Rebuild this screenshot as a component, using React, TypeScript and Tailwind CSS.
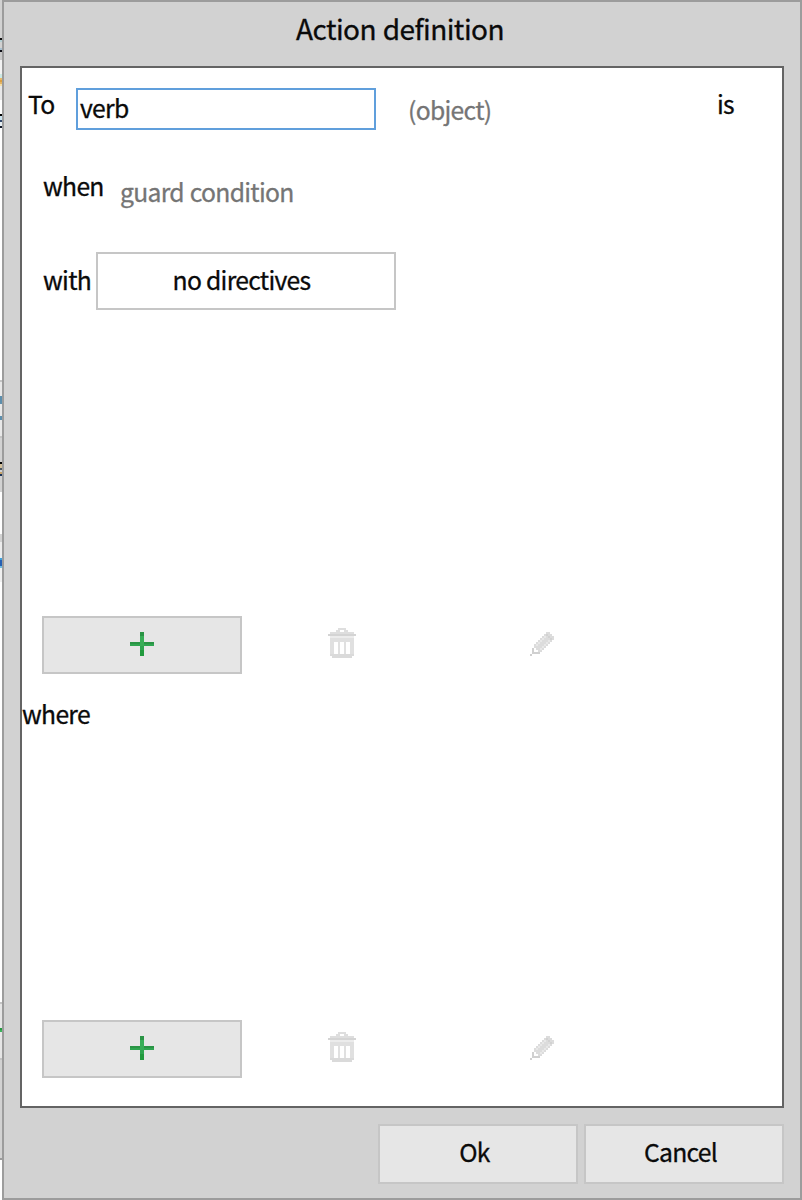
import type { ReactNode } from "react";

const strip: [number, string][] = [
  [38, "#d2d2d2"], [2, "#111111"], [2, "#b4cfd4"], [6, "#d2d2d2"], [2, "#a9c0d0"], [2, "#0b0b12"], [8, "#c8c8c8"],
  [14, "#f3f3f3"], [4, "#cdeae4"], [2, "#e9b868"], [2, "#dda040"], [2, "#e5b564"], [2, "#f4dfa8"], [14, "#e8e8e8"],
  [14, "#ffffff"], [2, "#000000"], [4, "#cbe4ef"], [2, "#31486c"], [4, "#e8f0f4"], [2, "#101828"], [252, "#ffffff"],
  [2, "#c4c4c4"], [14, "#e8e8e8"], [8, "#5c8eac"], [12, "#e8e8e8"], [4, "#5c8eac"], [16, "#e8e8e8"], [2, "#c4c4c4"],
  [24, "#d2d2d2"], [2, "#000000"], [4, "#d3c09b"], [2, "#4d5963"], [2, "#d2d2d2"], [2, "#c7a268"], [2, "#1a3358"], [16, "#d2d2d2"],
  [42, "#ffffff"], [8, "#d2d2d2"], [14, "#ededed"], [2, "#e4eff5"], [2, "#3fa0dc"], [6, "#2560b4"], [2, "#72bee2"], [14, "#f0f0f0"],
  [420, "#ffffff"], [2, "#c4c4c4"], [24, "#e6e6e6"], [2, "#249a40"], [2, "#3cb25c"], [26, "#e6e6e6"], [2, "#c4c4c4"],
  [98, "#d2d2d2"], [2, "#9c9c9c"], [40, "#ffffff"],
];

function Backdrop() {
  return (
    <div className="flex w-0.5 shrink-0 flex-col overflow-hidden">
      {strip.map(([height, color], i) => (
        <div key={i} className="shrink-0" style={{ height, backgroundColor: color }} />
      ))}
    </div>
  );
}

function Label({ children, className }: { children: ReactNode; className: string }) {
  return <span className={`block shrink-0 whitespace-nowrap leading-9 ${className}`}>{children}</span>;
}

function PlusIcon() {
  return (
    <svg width="24" height="24" shapeRendering="crispEdges">
      <path fill="#2fa550" d="M10 0h4v24h-4zM0 10h24v4H0z" />
      <path fill="#2a9445" d="M10 0h4v4h-4zM0 10h10v2H0zM14 10h10v2H14z" />
      <path fill="#38ae57" d="M10 4h4v10h-4z" />
      <path fill="#219a3d" d="M10 18h4v6h-4z" />
    </svg>
  );
}

function TrashIcon() {
  return (
    <svg width="28" height="30" shapeRendering="crispEdges">
      <path fill="#dedede" d="M10 0h8v2h-8zM8 2h4v2H8zM16 2h4v2h-4zM2 4h24v2H2z" />
      <path fill="#d4d4d4" d="M0 6h28v2H0z" />
      <path fill="#ececec" d="M2 8h24v2H2z" />
      <path fill="#e0e0e0" d="M2 10h24v4H2zM2 14h4v12H2zM10 14h2v12h-2zM16 14h2v12h-2zM22 14h4v12h-4z" />
      <path fill="#dadada" d="M2 26h24v2H2zM4 28h20v2H4z" />
    </svg>
  );
}

function PencilIcon() {
  return (
    <svg width="24" height="24" viewBox="0 0 12 12" shapeRendering="crispEdges">
      <path fill="#dcdcdc" d="M8 0h2v1h1v1h1v2h-1v1h-1v1h-1v1h-1v1h-1v1h-1v1h-2v-1h-1v-1h-1v-2h1v-1h1v-1h1v-1h1v-1h1v-1h1z" />
      <path fill="#e8e8e8" d="M7 2h1v1H7zM6 3h1v1H6zM5 4h1v1H5zM4 5h1v1H4zM3 6h1v1H3zM9 4h1v1H9zM8 5h1v1H8zM7 6h1v1H7zM6 7h1v1H6zM5 8h1v1H5z" />
      <path fill="#d2d2d2" d="M8 1h1v1H8zM9 2h1v1H9zM10 3h1v1h-1z" />
      <path fill="#d0d0d0" d="M1 8h1v2h3v1H1zM0 11h1v1H0z" />
    </svg>
  );
}

function Toolbar() {
  return (
    <div className="ml-5 flex h-[58px] w-[600px]">
      <button className="flex w-[200px] items-center justify-center border-2 border-[#c6c6c6] bg-[#e6e6e6] pb-0.5">
        <PlusIcon />
      </button>
      <button className="flex w-[200px] items-center justify-center pb-1"><TrashIcon /></button>
      <button className="flex w-[200px] items-center justify-center pb-0.5"><PencilIcon /></button>
    </div>
  );
}

export default function App() {
  return (
    <div className="flex h-[1200px] w-[802px] overflow-hidden bg-white font-['Noto_Sans_CJK_SC',sans-serif] text-[24.7px] tracking-[-0.7px] text-[#0a0a0a] [-webkit-text-stroke:0.3px] [word-spacing:1px]">
      <Backdrop />
      <div className="flex w-[800px] flex-col border-2 border-[#9c9c9c] bg-[#d2d2d2] px-4">
        <h1 className="h-16 pr-1 pt-2 text-center text-[28px] leading-9 tracking-[-0.55px]">Action definition</h1>
        <div className="flex h-[1042px] flex-col border-2 border-[#646464] bg-white">
          <div className="flex h-[82px] items-start">
            <Label className="ml-1.5 mt-[17px] w-12">To</Label>
            <div className="mt-5 h-[42px] w-[300px] border-2 border-[#609fdc] pl-0.5">
              <Label className="-mt-px">verb</Label>
            </div>
            <Label className="ml-8 mt-[23px] w-[309px] text-[#757575]">(object)</Label>
            <Label className="mt-[17px]">is</Label>
          </div>
          <div className="flex h-[102px] items-start">
            <Label className="ml-[21px] mt-[17px] w-[77px]">when</Label>
            <Label className="mt-[23px] text-[#757575]">guard condition</Label>
          </div>
          <div className="flex h-[364px] items-start">
            <Label className="ml-[21px] mt-[9px] w-[53px]">with</Label>
            <button className="h-[58px] w-[300px] border-2 border-[#c6c6c6] pb-1 pr-[9px]">
              <Label className="">no directives</Label>
            </button>
          </div>
          <Toolbar />
          <div className="h-[346px] pt-[21px]"><Label className="">where</Label></div>
          <Toolbar />
        </div>
        <div className="flex justify-end gap-1.5 pt-4">
          <button className="h-[60px] w-[200px] border-2 border-[#c6c6c6] bg-[#e6e6e6] pb-1 pr-[7px]">Ok</button>
          <button className="h-[60px] w-[200px] border-2 border-[#c6c6c6] bg-[#e6e6e6] pb-1 pr-[7px]">Cancel</button>
        </div>
      </div>
    </div>
  );
}
